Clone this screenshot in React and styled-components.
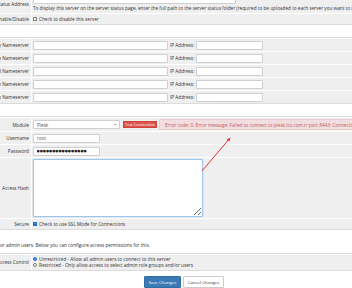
import React from 'react'
import styled, { createGlobalStyle } from 'styled-components'

const GlobalStyle = createGlobalStyle`
  html, body {
    margin: 0;
    padding: 0;
    background: #fff;
    overflow: hidden;
  }
  body {
    font-family: "Open Sans", "DejaVu Sans", sans-serif;
    font-size: 4.7px;
    color: #333;
  }
`

const Screen = styled.div`
  position: relative;
  width: 352px;
  height: 288px;
  overflow: hidden;
`

const Page = styled.div`
  width: 448px;
  margin: -8px 0 0 -40px;
`

const FormTable = styled.div`
  border-top: 1px solid #dcdcdc;
  border-bottom: 1px solid #dcdcdc;
  padding-top: 1px;
  margin-top: ${props => props.$gap || 0}px;
`

const Row = styled.div`
  display: grid;
  grid-template-columns: 72px 1fr;
  border-bottom: 1px solid #fff;
  &:last-child {
    border-bottom: 0;
  }
`

const Label = styled.div`
  background: #efefef;
  border-right: 1px solid #fff;
  padding-right: 2px;
  display: flex;
  align-items: center;
  justify-content: flex-end;
  white-space: nowrap;
  color: #333;
`

const Cell = styled.div`
  background: #efefef;
  padding: ${props => props.$pad || '1.5px 1px'};
  display: flex;
  flex-direction: ${props => (props.$stack ? 'column' : 'row')};
  align-items: ${props => (props.$stack ? 'flex-start' : 'center')};
  gap: ${props => props.$gap ?? 2}px;
  white-space: nowrap;
  min-width: 0;
`

const Input = styled.input`
  box-sizing: border-box;
  width: ${props => props.$w}px;
  height: 9px;
  padding: 0 3px;
  margin: 0;
  border: 0.6px solid #cfcfcf;
  border-radius: 1px;
  background: #fff;
  font-family: inherit;
  font-size: 4.7px;
  color: #555;
  outline: none;
`

const Dots = styled(Input)`
  font-family: "DejaVu Sans", sans-serif;
  font-size: 3.6px;
  letter-spacing: 0;
  color: #222;
  padding: 0 2.5px;
`

const Help = styled.div`
  line-height: 6px;
  margin-top: ${props => props.$top || 0}px;
`

const SelectWrap = styled.div`
  position: relative;
  width: 87px;
  height: 9.5px;
`

const Select = styled.select`
  appearance: none;
  box-sizing: border-box;
  width: 100%;
  height: 100%;
  margin: 0;
  padding: 0 3px;
  border: 0.6px solid #cfcfcf;
  border-radius: 1px;
  background: #fff;
  font-family: inherit;
  font-size: 4.7px;
  color: #555;
  outline: none;
`

const Caret = styled.svg`
  position: absolute;
  right: 4px;
  top: 4px;
  width: 2.5px;
  height: 1.6px;
  pointer-events: none;
`

const SmallButton = styled.button`
  box-sizing: border-box;
  width: 34px;
  height: 7px;
  padding: 0;
  margin: 0 0 0 1px;
  border: 0.5px solid #d43f3a;
  border-radius: 0.6px;
  background: #d9534f;
  color: #fff;
  font-family: inherit;
  font-size: 4px;
  line-height: 1;
`

const Alert = styled.div`
  box-sizing: border-box;
  height: 11px;
  padding: 0 5px;
  display: flex;
  align-items: center;
  background: #f2dede;
  border: 0.6px solid #ebccd1;
  border-radius: 1px;
  color: #c0625f;
  white-space: nowrap;
`

const TextArea = styled.textarea`
  box-sizing: border-box;
  width: 170px;
  height: 58px;
  margin: 0;
  padding: 2px;
  border: 0.8px solid #9ec7ea;
  border-radius: 1px;
  background: #fff;
  resize: both;
  outline: none;
  box-shadow: 0 0 1.5px rgba(102, 175, 233, 0.5);
`

const Check = styled.span`
  box-sizing: border-box;
  display: inline-flex;
  align-items: center;
  justify-content: center;
  width: 4px;
  height: 4px;
  border: 0.5px solid ${props => (props.$on ? '#1a6fd6' : '#7a7a7a')};
  border-radius: ${props => (props.$round ? '50%' : '0.6px')};
  background: ${props => (props.$on && !props.$round ? '#1a6fd6' : '#fff')};
  flex: none;
`

const Dot = styled.span`
  width: 2px;
  height: 2px;
  border-radius: 50%;
  background: #1a6fd6;
`

const Option = styled.label`
  display: flex;
  align-items: center;
  gap: 2px;
  line-height: ${props => props.$lh || 6}px;
`

const Note = styled.p`
  margin: 0;
  padding: 12px 0 5px 40px;
  line-height: 6px;
  white-space: nowrap;
`

const ButtonBar = styled.div`
  display: flex;
  justify-content: center;
  gap: 1.5px;
  margin-top: 5.5px;
`

const Button = styled.button`
  box-sizing: border-box;
  height: 12px;
  padding: 0 4px;
  margin: 0;
  border: 0.6px solid ${props => (props.$primary ? '#2e6da4' : '#ccc')};
  border-radius: 1px;
  background: ${props => (props.$primary ? '#3979b5' : '#fff')};
  color: ${props => (props.$primary ? '#fff' : '#333')};
  font-family: inherit;
  font-size: 4.3px;
`

const Arrow = styled.svg`
  position: absolute;
  left: 0;
  top: 0;
  width: 352px;
  height: 288px;
  pointer-events: none;
`

const nameservers = ['Primary', 'Secondary', 'Third', 'Fourth', 'Fifth']

const App = () => (
  <Screen>
    <GlobalStyle />
    <Page>
      <FormTable>
        <Row>
          <Label>Server Status Address</Label>
          <Cell $stack $gap={0} $pad="1px 1px 2px">
            <Input $w={203} readOnly />
            <Help $top={1}>
              To display this server on the server status page, enter the full path to the server status folder (required to be uploaded to each server you want to monitor)
            </Help>
          </Cell>
        </Row>
        <Row>
          <Label>Enable/Disable</Label>
          <Cell $pad="2px 1px">
            <Option>
              <Check />
              Check to disable this server
            </Option>
          </Cell>
        </Row>
      </FormTable>

      <FormTable $gap={12}>
        {nameservers.map(n => (
          <Row key={n}>
            <Label>{n} Nameserver</Label>
            <Cell>
              <Input $w={135} readOnly />
              IP Address:
              <Input $w={67} readOnly />
            </Cell>
          </Row>
        ))}
      </FormTable>

      <FormTable $gap={12}>
        <Row>
          <Label>Module</Label>
          <Cell $pad="1px 1px">
            <SelectWrap>
              <Select defaultValue="plesk">
                <option value="plesk">Plesk</option>
              </Select>
              <Caret viewBox="0 0 5 3">
                <path d="M0 0h5L2.5 3z" fill="#888" />
              </Caret>
            </SelectWrap>
            <SmallButton>Test Connection</SmallButton>
            <Alert>
              Error code: 0. Error message: Failed to connect to plesk.lto.com.tr port 8443: Connection refused
            </Alert>
          </Cell>
        </Row>
        <Row>
          <Label>Username</Label>
          <Cell>
            <Input $w={67} defaultValue="root" readOnly />
          </Cell>
        </Row>
        <Row>
          <Label>Password</Label>
          <Cell>
            <Dots $w={67} defaultValue="●●●●●●●●●●●●●●●●" readOnly />
          </Cell>
        </Row>
        <Row>
          <Label>Access Hash</Label>
          <Cell $pad="0.5px 1px 1px">
            <TextArea readOnly />
          </Cell>
        </Row>
        <Row>
          <Label>Secure</Label>
          <Cell $pad="2px 1px">
            <Option>
              <Check $on>
                <svg width="3" height="3" viewBox="0 0 6 6">
                  <path d="M1 3.2l1.4 1.4L5 1.6" fill="none" stroke="#fff" strokeWidth="1.2" />
                </svg>
              </Check>
              Check to use SSL Mode for Connections
            </Option>
          </Cell>
        </Row>
      </FormTable>

      <Note>or admin users. Below you can configure access permissions for this.</Note>

      <FormTable>
        <Row>
          <Label>Access Control</Label>
          <Cell $stack $gap={0} $pad="1px 1px">
            <Option $lh={6.5}>
              <Check $on $round>
                <Dot />
              </Check>
              Unrestricted - Allow all admin users to connect to this server
            </Option>
            <Option $lh={6.5}>
              <Check $round />
              Restricted - Only allow access to select admin role groups and/or users
            </Option>
          </Cell>
        </Row>
      </FormTable>

      <ButtonBar>
        <Button $primary>Save Changes</Button>
        <Button>Cancel Changes</Button>
      </ButtonBar>
    </Page>

    <Arrow viewBox="0 0 352 288">
      <line x1="202" y1="171" x2="228.5" y2="139.8" stroke="#e8302c" strokeWidth="1" />
      <path d="M230.6 137.4 L229.2 141.6 L226.6 139.4 Z" fill="#e8302c" />
    </Arrow>
  </Screen>
)

export default App
